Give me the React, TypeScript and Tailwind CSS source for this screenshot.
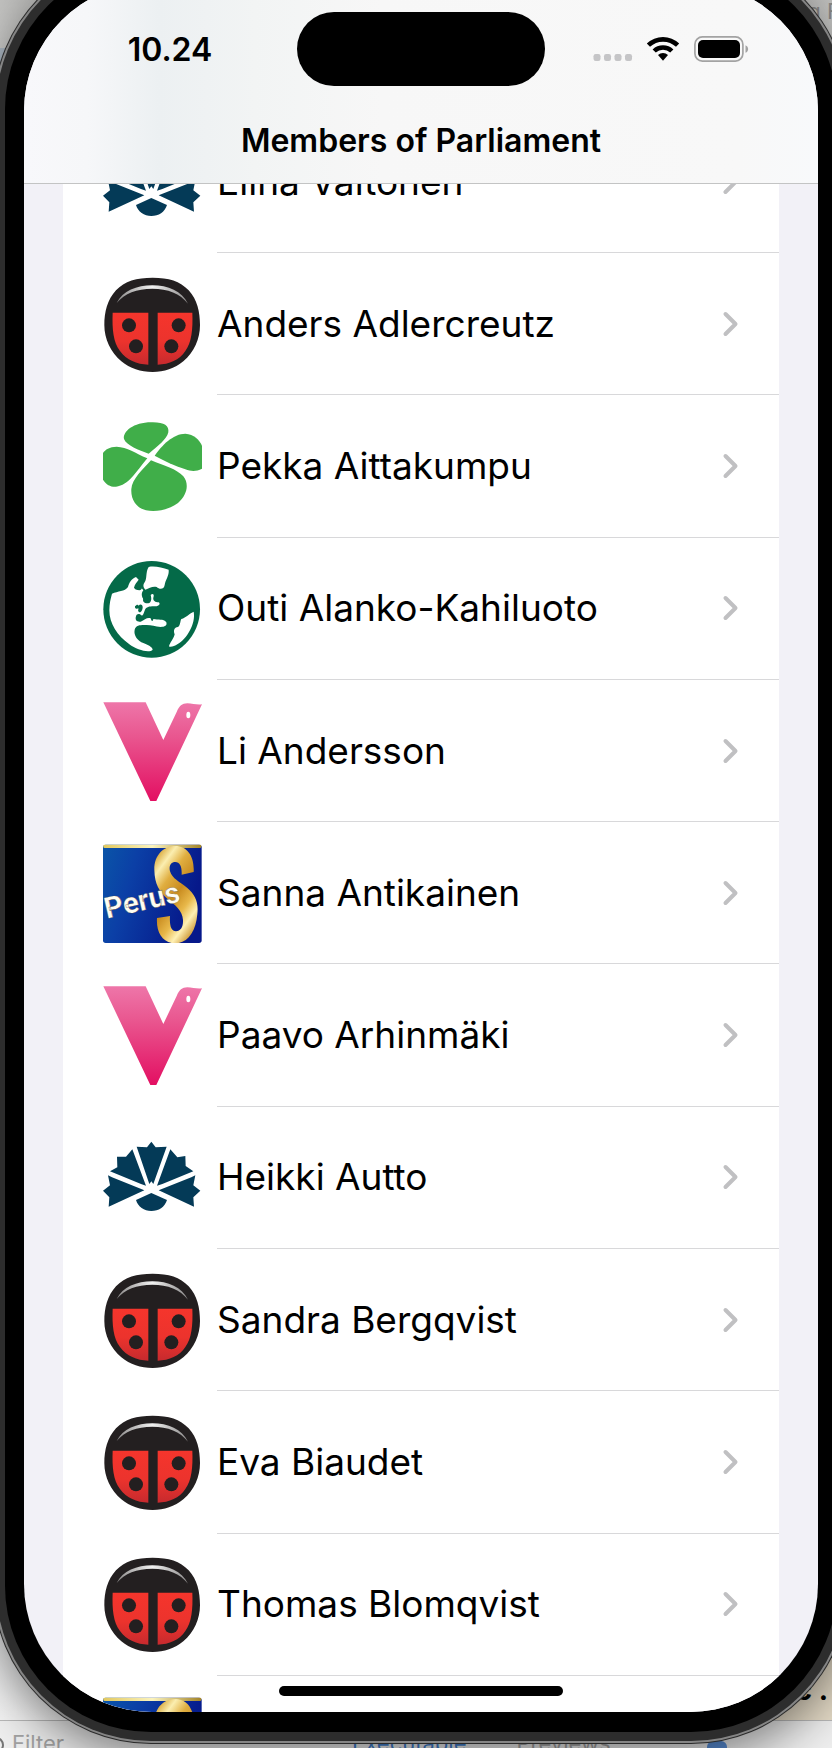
import React from "react";

type Party = "rkp" | "kesk" | "vihr" | "vas" | "ps" | "kok";

const members: { name: string; party: Party }[] = [
  { name: "Elina Valtonen", party: "kok" },
  { name: "Anders Adlercreutz", party: "rkp" },
  { name: "Pekka Aittakumpu", party: "kesk" },
  { name: "Outi Alanko-Kahiluoto", party: "vihr" },
  { name: "Li Andersson", party: "vas" },
  { name: "Sanna Antikainen", party: "ps" },
  { name: "Paavo Arhinmäki", party: "vas" },
  { name: "Heikki Autto", party: "kok" },
  { name: "Sandra Bergqvist", party: "rkp" },
  { name: "Eva Biaudet", party: "rkp" },
  { name: "Thomas Blomqvist", party: "rkp" },
  { name: "", party: "ps" },
];

function Ladybird() {
  return (
    <svg viewBox="39 44 297 297" className="size-full" aria-hidden="true">
      <defs>
        <linearGradient id="wing" x1="0" y1="0" x2="0" y2="1">
          <stop offset="0" stopColor="#f5352c" />
          <stop offset="0.55" stopColor="#ec332d" />
          <stop offset="1" stopColor="#c72a2e" />
        </linearGradient>
        <linearGradient id="shine" x1="0" y1="0" x2="1" y2="0">
          <stop offset="0" stopColor="#8a8888" />
          <stop offset="0.5" stopColor="#f2f2f2" />
          <stop offset="1" stopColor="#8a8888" />
        </linearGradient>
      </defs>
      <path
        d="M188 52C236 52 270 62 296 90C322 118 330 156 330 194C330 236 312 276 280 303C254 325 222 335 188 335C152 335 120 325 94 303C62 276 43 236 43 194C43 156 52 118 78 90C104 62 140 52 188 52Z"
        fill="#231f20"
      />
      <path d="M68 157H175V313C140 312 110 299 90 272C70 246 66 206 68 157Z" fill="url(#wing)" />
      <path d="M203 157H307C309 206 305 246 286 272C268 299 238 312 203 313Z" fill="url(#wing)" />
      <circle cx="117" cy="195" r="21" fill="#231f20" />
      <circle cx="138" cy="258" r="21" fill="#231f20" />
      <circle cx="266" cy="195" r="21" fill="#231f20" />
      <circle cx="244" cy="258" r="21" fill="#231f20" />
      <path d="M80 128C98 92 140 75 187 75C234 75 276 92 294 130C270 99 234 85 187 85C140 85 104 99 80 128Z" fill="url(#shine)" />
    </svg>
  );
}

function Clover() {
  return (
    <svg viewBox="39 50 297 297" className="size-full" aria-hidden="true">
      <g fill="#40ae49">
        <path d="M176 160C146 149 110 136 102 116C98 94 130 66 184 66C222 65 238 76 235 96C230 118 204 136 176 160Z" />
        <path d="M194 166C216 134 250 100 286 100C312 102 328 118 336 136V205C318 214 304 213 286 207C254 196 222 182 194 166Z" />
        <path d="M172 174C136 158 112 140 80 139C58 139 46 148 39 158V238C50 254 62 260 78 259C116 256 138 214 172 174Z" />
        <path d="M183 180C222 196 260 206 280 228C298 250 292 284 264 308C238 328 200 336 168 330C138 322 122 296 124 266C126 236 158 208 183 180Z" />
      </g>
    </svg>
  );
}

function Globe() {
  return (
    <svg viewBox="39 42 297 297" className="size-full" aria-hidden="true">
      <circle cx="185" cy="193" r="145" fill="#046a48" />
      <g fill="#fff">
        <path d="M66 146C84 138 104 140 114 126C118 112 124 102 138 96L146 104C140 112 134 118 132 128C138 136 146 138 154 128L160 136C152 146 156 156 160 162C156 170 166 178 178 174C186 168 184 158 182 150C188 144 194 148 190 158C188 166 196 172 206 172C212 176 208 184 196 184C182 184 172 184 166 192C162 200 162 208 156 212C148 204 140 206 138 214C134 226 142 232 152 230C164 224 172 216 182 220C184 228 188 232 190 222C204 226 220 220 229 232C232 242 224 246 212 246C196 244 184 240 170 240C156 240 138 238 134 254C130 272 144 288 160 294C174 300 188 306 188 314C178 326 140 314 118 298C82 272 58 236 58 196C58 176 62 160 66 146Z" />
        <path d="M176 66C194 62 216 68 236 74C238 92 226 104 224 120C222 134 208 134 200 126C188 122 178 130 166 134C160 128 158 120 164 112C172 100 166 82 176 66Z" />
        <path d="M311 200C318 236 290 282 262 298C254 304 240 308 237 304C240 292 250 284 254 268C250 256 252 248 264 246C272 240 270 228 274 222C288 218 300 204 311 200Z" />
      </g>
      <g fill="#046a48">
        <path d="M135 184C140 178 144 178 146 182C150 176 158 178 158 186C158 196 152 206 146 200C142 196 148 192 144 190C138 194 134 190 135 184Z" />
        <path d="M164 146C172 150 176 158 174 168L162 166C156 160 158 152 164 146Z" />
        <path d="M140 128C146 122 152 124 156 130C152 138 144 138 140 128Z" />
      </g>
    </svg>
  );
}

function Dove() {
  return (
    <svg viewBox="39 48 297 297" className="size-full" aria-hidden="true">
      <defs>
        <linearGradient id="pink" x1="0" y1="0" x2="0" y2="1">
          <stop offset="0" stopColor="#ee76a9" />
          <stop offset="0.35" stopColor="#e9568f" />
          <stop offset="1" stopColor="#e30f62" />
        </linearGradient>
      </defs>
      <path
        d="M40 49H167L220 162L260 78C268 60 276 52 292 52C308 52 322 58 336 55L199 345H181Z"
        fill="url(#pink)"
      />
      <ellipse cx="295" cy="87" rx="6" ry="10" fill="#fff" />
    </svg>
  );
}

function PerusS() {
  return (
    <svg viewBox="39 40 297 297" className="size-full" aria-hidden="true">
      <defs>
        <linearGradient id="blue" x1="0" y1="0" x2="1" y2="0.3">
          <stop offset="0" stopColor="#0a55a8" />
          <stop offset="0.35" stopColor="#0b3fa6" />
          <stop offset="1" stopColor="#06188a" />
        </linearGradient>
        <linearGradient id="gold" x1="0.2" y1="0" x2="0.8" y2="1">
          <stop offset="0" stopColor="#d9a83a" />
          <stop offset="0.14" stopColor="#fbeeb0" />
          <stop offset="0.3" stopColor="#e0ae40" />
          <stop offset="0.5" stopColor="#c98c20" />
          <stop offset="0.68" stopColor="#e8b84a" />
          <stop offset="0.82" stopColor="#fff0b4" />
          <stop offset="1" stopColor="#c2851a" />
        </linearGradient>
        <linearGradient id="edge" x1="0" y1="0" x2="1" y2="0">
          <stop offset="0" stopColor="#e2c95f" />
          <stop offset="0.5" stopColor="#fbf3bd" />
          <stop offset="1" stopColor="#a38428" />
        </linearGradient>
      </defs>
      <rect x="39" y="42" width="296" height="295" rx="8" fill="url(#blue)" />
      <rect x="40" y="42" width="294" height="10" rx="4" fill="url(#edge)" />
      <path
        d="M193 118C192 76 218 46 256 46C292 46 314 78 311 124L275 132C276 108 270 94 256 94C242 94 236 106 240 122C246 144 270 154 292 172C316 192 326 216 322 250C318 304 292 338 256 338C218 338 198 306 201 262L240 256C238 286 244 302 258 302C272 302 280 288 279 268C277 238 256 224 232 204C208 184 194 160 193 118Z"
        fill="url(#gold)"
      />
      <g transform="rotate(-13 60 272)">
        <text
          x="52"
          y="262"
          fontSize="88"
          fontWeight="700"
          fill="#fffdf2"
          stroke="#5a4a3a"
          strokeWidth="1"
          className="font-['Roboto','Liberation_Sans',sans-serif]"
        >
          Perus
        </text>
      </g>
    </svg>
  );
}

function Cornflower() {
  return (
    <svg viewBox="39 24 297 297" className="size-full" aria-hidden="true">
      <g fill="#043a57">
        <path d="M184 65L197 82L230 80L190 192L184 184L178 192L140 80L171 82Z" />
        <path d="M127 88L168 197L153 192L60 154L82 142L81 110L108 110Z" />
        <path d="M241 88L262 112L286 108L287 138L310 154L217 192L201 197Z" />
        <path d="M54 166L66 172L163 211L56 260L58 232L39 212L60 196Z" />
        <path d="M316 166L304 172L206 211L312 260L310 232L331 212L310 196Z" />
        <path d="M138 240L184 219L231 240C224 262 206 273 184 273C162 273 144 260 138 240Z" />
      </g>
    </svg>
  );
}

const logos: Record<Party, () => React.JSX.Element> = {
  rkp: Ladybird,
  kesk: Clover,
  vihr: Globe,
  vas: Dove,
  ps: PerusS,
  kok: Cornflower,
};

function StatusIcons() {
  return (
    <div className="flex items-center justify-center pr-[22px]" aria-label="Status">
      <svg width="40" height="26" viewBox="0 0 40 26" fill="#c5c5c7" aria-hidden="true">
        <rect x="0.5" y="18" width="7" height="7" rx="2.2" />
        <rect x="11" y="18" width="7" height="7" rx="2.2" />
        <rect x="21.5" y="18" width="7" height="7" rx="2.2" />
        <rect x="32" y="18" width="7" height="7" rx="2.2" />
      </svg>
      <svg width="34" height="26" viewBox="0 0 34 26" className="ml-[13px]" aria-hidden="true">
        <path d="M0.8 7.6A23.5 23.5 0 0 1 33.2 7.6L30 10.8A19 19 0 0 0 4 10.8Z" />
        <path d="M6.6 13.4A15 15 0 0 1 27.4 13.4L24.2 16.6A10.6 10.6 0 0 0 9.8 16.6Z" />
        <path d="M12 19A7.4 7.4 0 0 1 22 19L17 24.8Z" />
      </svg>
      <svg width="55" height="26" viewBox="0 0 55 26" className="ml-[14px]" aria-hidden="true">
        <rect x="0.9" y="0.9" width="48" height="24.2" rx="7.5" fill="none" stroke="#a3a3a3" strokeWidth="1.7" />
        <rect x="4" y="4" width="42" height="18" rx="5" />
        <path d="M51.5 9.2C55 10.6 55 15.4 51.5 16.8Z" fill="#a3a3a3" />
      </svg>
    </div>
  );
}

function MemberRow({ name, party, className }: { name: string; party: Party; className: string }) {
  const Logo = logos[party];
  return (
    <li className={className}>
      <a href="#member" className="flex flex-1 items-stretch pl-10">
        <span className="mr-[15px] size-[99px] shrink-0 self-center">
          <Logo />
        </span>
        <span className="flex flex-1 items-center justify-between border-b border-[#d8d8da] pr-10">
          <span className="whitespace-nowrap text-[37px] leading-[44px]">{name}</span>
          <svg width="17" height="26" viewBox="0 0 17 26" fill="none" stroke="#c0c0c2" strokeWidth="4" strokeLinecap="round" strokeLinejoin="round" aria-hidden="true">
            <path d="M3.5 3L13.5 13L3.5 23" />
          </svg>
        </span>
      </a>
    </li>
  );
}

function Backdrop() {
  return (
    <div className="absolute inset-0 flex flex-col overflow-hidden bg-[#d2d2d0] font-['Inter',sans-serif]" aria-hidden="true">
      <div className="flex h-12 justify-end bg-linear-to-b from-[#c4c4c2] to-[#d4d4d2] text-[22px] leading-[22px] text-[#8b8b89]">
        <span className="-mr-2">g F</span>
      </div>
      <div className="flex flex-1 items-end justify-end bg-linear-to-b from-[#b4c0cc] to-[#f4f4f4]">
        <span className="flex h-16 w-28 items-end justify-end bg-[#e6dcc8] pr-1 pb-4 text-[28px] leading-[28px] font-bold text-black">c .</span>
      </div>
      <div className="flex h-[28px] items-start border-t border-[#b9b9b9] bg-[#efefef] pt-2 text-[22px] leading-[28px] text-[#a3a3a3]">
        <span className="-ml-3 mt-2 size-4 rounded-full border-2 border-[#777]" />
        <span className="ml-2">Filter</span>
        <span className="ml-[288px] text-[#3f7fd0]">Executable</span>
        <span className="ml-[50px]">Previews</span>
        <span className="mt-3 ml-[96px] size-5 rounded-md bg-[#5a8fd8]" />
      </div>
    </div>
  );
}

export default function App() {
  return (
    <div className="relative flex min-h-screen flex-col overflow-hidden">
      <Backdrop />
      <main className="relative mt-[-37px] mr-[-5px] mb-4 ml-[5px] flex flex-1 flex-col rounded-[146px] bg-black px-[19px] py-5 font-['Inter',sans-serif] text-black shadow-[0_0_0_9px_#2d2d2d,0_0_0_11px_#858585,0_0_0_12px_#2a2a2a,0_12px_50px_12px_rgba(0,0,0,0.5)]">
        <div className="relative flex flex-1 flex-col overflow-hidden rounded-[128px] bg-[#f2f1f7]">
          <header className="flex h-[201px] flex-col border-b border-[#c3c4c4] bg-[linear-gradient(90deg,#f8f8fb_0%,#f6f7f9_8%,#ecf0f2_17%,#f2f4f4_29%,#f7f7f7_45%,#f8f8f8_90%,#f8f9fb_100%)] pt-[29px]">
            <div className="grid grid-cols-[1fr_248px_1fr] items-center">
              <time className="pt-[2px] pl-[19px] text-center text-[32px] leading-10 font-semibold">10.24</time>
              <span className="h-[74px] rounded-full bg-black" />
              <StatusIcons />
            </div>
            <h1 className="mt-[35px] text-center text-[32px] leading-10 font-semibold">Members of Parliament</h1>
          </header>
          <ul className="mx-[39px] flex flex-1 flex-col overflow-hidden bg-white">
            {members.map((m, i) => (
              <MemberRow
                key={i}
                name={m.name}
                party={m.party}
                className={
                  i === 0
                    ? "-mt-[73px] flex h-[142px] shrink-0"
                    : i === members.length - 1
                      ? "-mb-[106px] flex h-[142px] shrink-0"
                      : "flex min-h-[120px] flex-1"
                }
              />
            ))}
          </ul>
          <span className="absolute bottom-4 left-1/2 h-[10px] w-[284px] -translate-x-1/2 rounded-full bg-black" />
        </div>
      </main>
    </div>
  );
}
